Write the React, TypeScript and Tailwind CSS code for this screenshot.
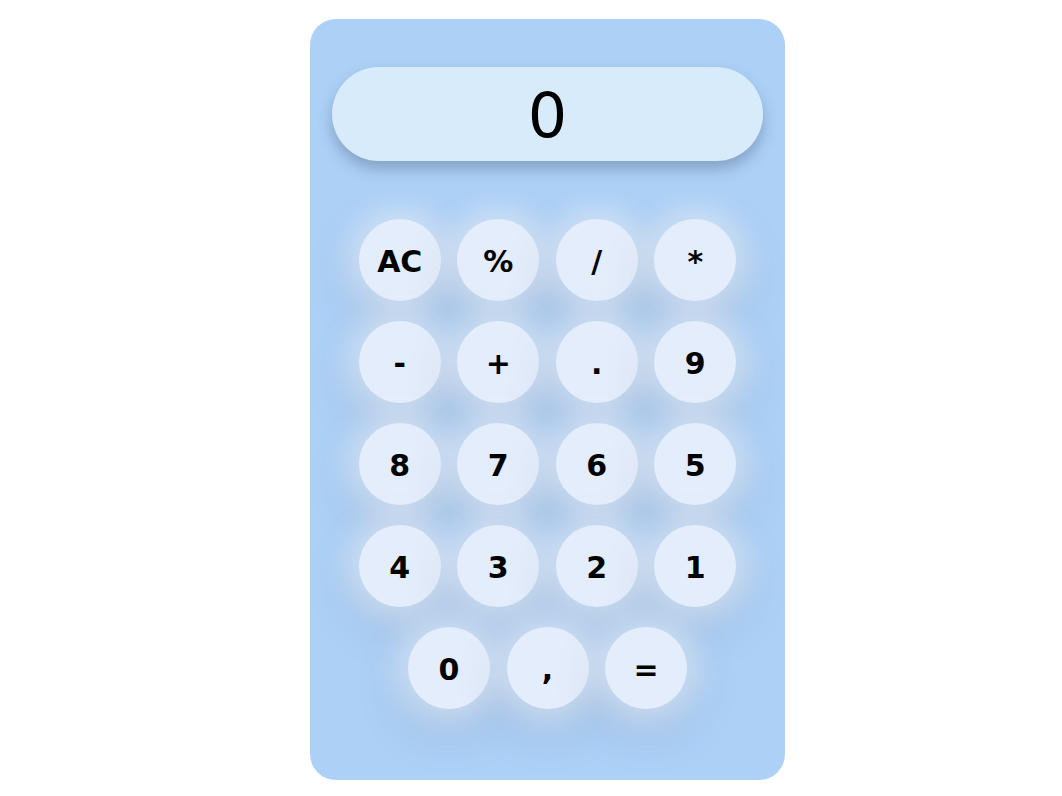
const keys = ['AC', '%', '/', '*', '-', '+', '.', '9', '8', '7', '6', '5', '4', '3', '2', '1'];
const lastRow = ['0', ',', '='];

const Key = ({ label }: { label: string }) => (
  <button className="flex h-[82px] w-[82px] items-center justify-center rounded-full bg-[#e3edfc] pt-[2px] text-[30px] font-bold text-black shadow-[0_0_30px_12px_rgba(255,255,255,0.45),0_16px_40px_10px_rgba(120,125,150,0.22)]">
    {label}
  </button>
);

export default function App() {
  return (
    <div
      className="flex min-h-[796px] w-full justify-center bg-white pl-[33px] pt-[19px]"
      style={{ fontFamily: '"DejaVu Sans", Verdana, sans-serif' }}
    >
      <div className="flex h-[761px] w-[475px] flex-col items-center rounded-[26px] bg-[#acd0f6] px-[22px] pt-[48px]">
        <div className="flex h-[94px] w-full items-center justify-center rounded-full bg-[#d8ebfb] pt-[2px] text-[62px] text-black shadow-[0_8px_14px_rgba(70,90,120,0.38)]">
          0
        </div>
        <div className="mt-[58px] grid grid-cols-4 gap-x-[16.5px] gap-y-[20px]">
          {keys.map((k) => (
            <Key key={k} label={k} />
          ))}
        </div>
        <div className="mt-[20px] flex gap-x-[16.5px]">
          {lastRow.map((k) => (
            <Key key={k} label={k} />
          ))}
        </div>
      </div>
    </div>
  );
}
